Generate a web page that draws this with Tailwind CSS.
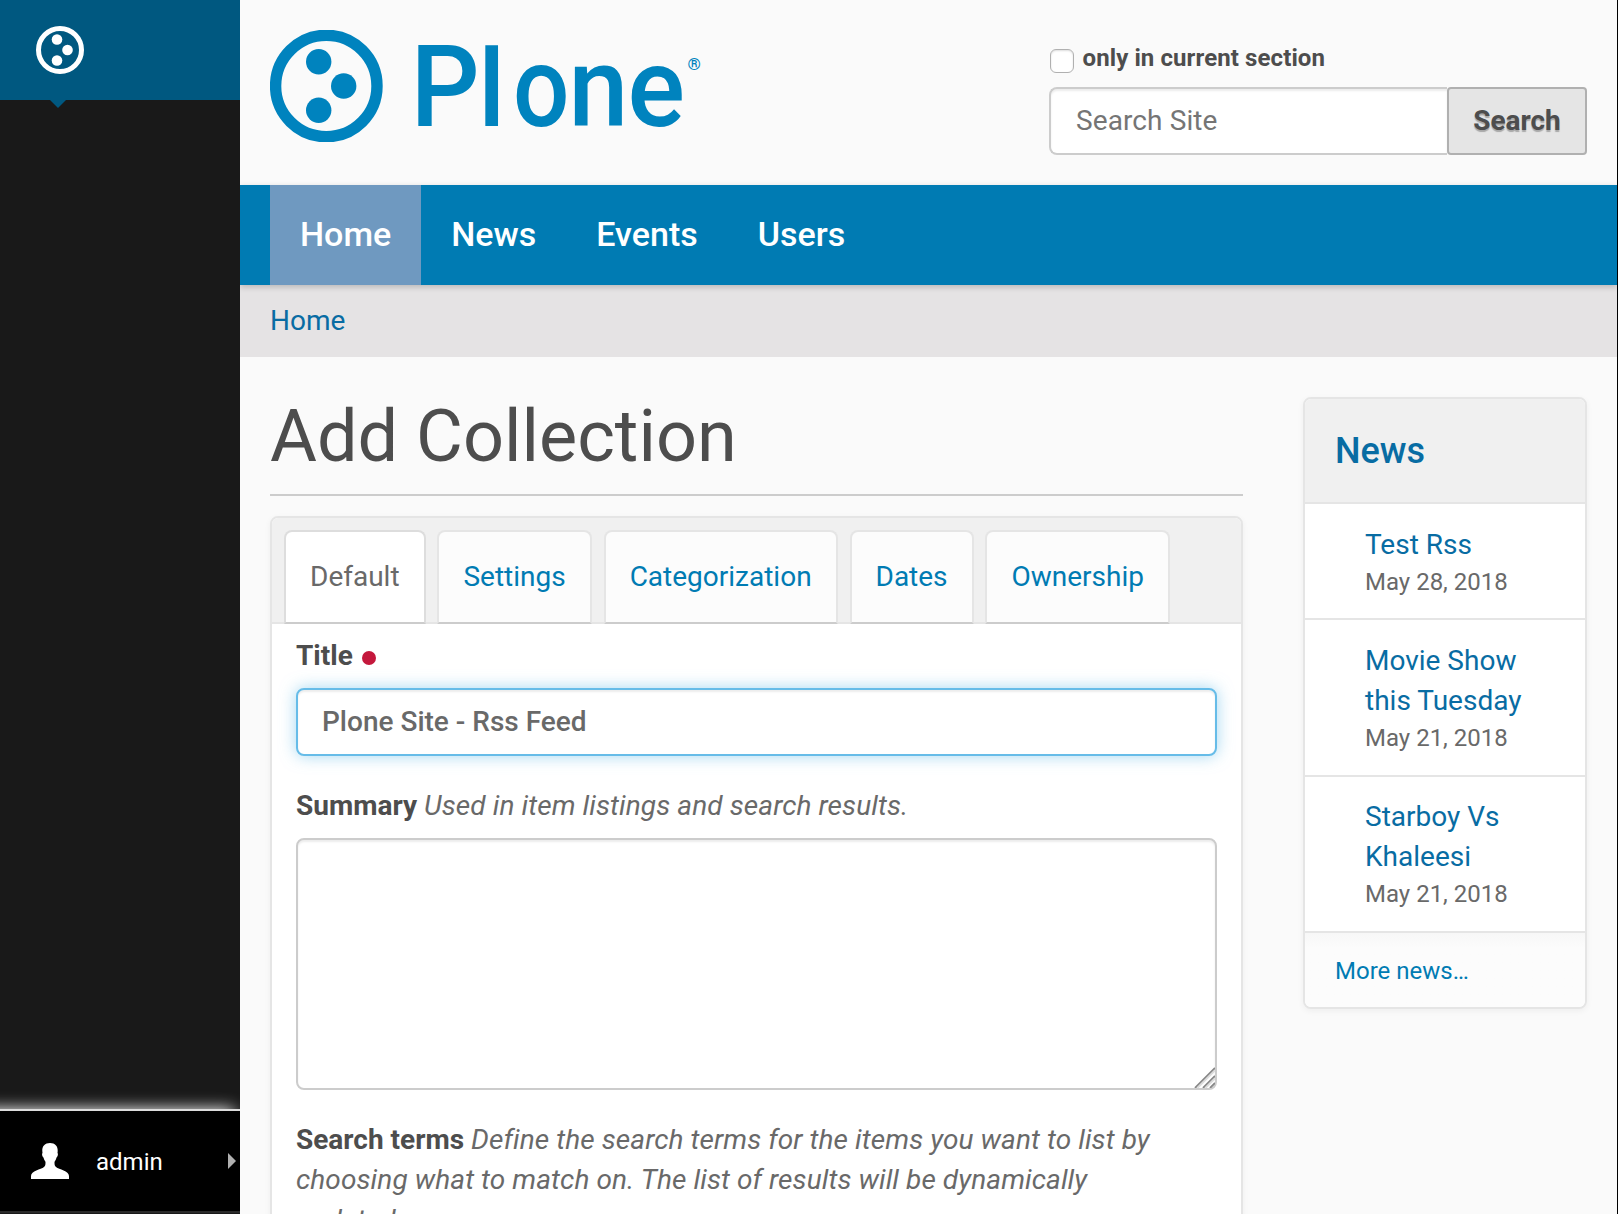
<!DOCTYPE html>
<html lang="en">
<head>
<meta charset="utf-8">
<title>Add Collection</title>
<script src="https://cdn.jsdelivr.net/npm/@tailwindcss/browser@4"></script>
</head>
<body class="flex h-[1214px] w-[1618px] overflow-hidden bg-black font-['Roboto',sans-serif] text-[28px] leading-10 text-[#696969]">
<aside class="flex h-[1214px] w-60 shrink-0 flex-col bg-[#191919]">
  <div class="relative h-[100px] bg-[#005880]">
    <svg class="absolute left-0 top-0" width="240" height="110" viewBox="0 0 240 110">
      <circle cx="60" cy="50" r="21.5" fill="none" stroke="#fff" stroke-width="5"/>
      <circle cx="57" cy="39.5" r="5.3" fill="#fff"/><circle cx="67.5" cy="50" r="5.3" fill="#fff"/><circle cx="57" cy="60.5" r="5.3" fill="#fff"/>
      <path d="M50 100h16l-8 8z" fill="#005880"/>
    </svg>
  </div>
  <div class="flex-1"></div>
  <div class="h-5 w-60 shrink-0 overflow-hidden"><div class="-ml-5 mt-5 h-10 w-[254px] shadow-[0_0_16px_#fff]"></div></div>
  <div class="mb-px flex h-[104px] shrink-0 items-center border-b-2 border-t-2 border-b-[#2a2a2a] border-t-[#dcdcdc] bg-black pl-[31px] pr-1 text-2xl text-white">
    <svg width="38" height="36" viewBox="0 0 38 36" fill="#fff"><path d="M19 0c-5 0-8 3-7.700 8l.2 2c-1 1 0 4 1 4.500.5 2.500 1.500 3 2 4.500 0 2 0 4-1.500 5C10 26.500 0 27.500 0 33v3h38v-3c0-5.500-10-6.500-13-9-1.500-1-1.500-3-1.500-5 .5-1.500 1.500-2 2-4.500 1-.5 2-3.500 1-4.500l.2-2C27 3 24 0 19 0z"/></svg>
    <span class="ml-[27px] flex-1 pt-0.5">admin</span>
    <svg width="8" height="16" viewBox="0 0 8 16"><path d="M0 0l8 8-8 8z" fill="#b0b0b0"/></svg>
  </div>
</aside>
<div class="flex h-[1214px] w-[1377px] shrink-0 flex-col overflow-hidden bg-[#fafafa]">
  <header class="flex h-[185px] shrink-0 justify-between pl-[30px] pr-[30px]">
    <svg class="mt-[30px]" width="440" height="112" viewBox="270 30 440 112" fill="#0083be">
      <circle cx="326.300" cy="86" r="50.700" fill="none" stroke="#0083be" stroke-width="11.400"/>
      <circle cx="318.700" cy="61.700" r="12.700"/><circle cx="343.700" cy="86" r="12.700"/><circle cx="318.700" cy="110.300" r="12.700"/>
      <g font-family="Roboto" font-weight="500" font-size="113">
        <text transform="translate(410.500 125.500) scale(.96 1)">P</text>
        <text transform="translate(478 125.500) scale(.95 .945)">l</text>
        <text transform="translate(513 125.500) scale(.88 1)">o</text>
        <text transform="translate(568.500 125.500) scale(.95 .98)">n</text>
        <text transform="translate(627.500 125.500) scale(.95 .98)">e</text>
      </g>
      <text x="687.500" y="70" font-family="Roboto" font-weight="700" font-size="17">®</text>
    </svg>
    <form class="w-[538px] pt-[38px]">
      <label class="flex h-10 pl-px text-2xl font-bold leading-10 tracking-[0.1px] text-[#4d4d4d]"><span class="mr-[8.500px] mt-[11px] h-6 w-6 rounded-md border border-[#b0b0b0] bg-white shadow-[inset_0_1px_2px_#0002]"></span><span>only in current section</span></label>
      <div class="mt-[9px] flex h-[68px]">
        <div class="flex flex-1 items-center rounded-l-lg border-2 border-r-0 border-[#ccc] bg-white pl-[25px] tracking-[0.1px] text-[#757575] shadow-[inset_0_2px_2px_#00000013]">Search Site</div>
        <div class="flex w-[140px] items-center justify-center rounded-[4px] border-2 border-[#b0b0b0] bg-[#e5e5e5] font-bold text-[#4d4d4d] [text-shadow:0_2px_1px_#0004]">Search</div>
      </div>
    </form>
  </header>
  <nav class="z-10 flex h-[100px] shrink-0 bg-[#007bb3] pl-[30px] text-[34px] font-medium leading-[98px] text-white shadow-[0_2px_6px_#0003]">
    <a class="bg-[#6f99c0] px-[30px]">Home</a><a class="px-[30px]">News</a><a class="px-[30px]">Events</a><a class="px-[30px]">Users</a>
  </nav>
  <div class="h-[72px] shrink-0 bg-[#e5e3e4] pl-[30px] leading-[72px] text-[#086ca3]">Home</div>
  <div class="flex min-h-0 flex-1 items-start">
    <main class="ml-[30px] w-[973px]">
      <h1 class="h-[139px] border-b-2 border-[#ccc] pt-[40px] text-[72px] leading-[80px] text-[#4d4d4d]">Add Collection</h1>
      <div class="mt-5 h-[760px] rounded-t-lg border-2 border-[#e5e5e5] bg-white shadow-[0_2px_6px_#0000000d]">
        <div class="flex h-[106px] gap-[11.900px] rounded-t-md border-b-2 border-[#e5e5e5] bg-[#f0f0f0] pl-3 pt-3 text-[#007bb3]">
          <a class="h-[94px] rounded-t-lg border-2 border-[#ddd] border-b-[#ccc] bg-white px-6 leading-[90px] text-[#696969]">Default</a>
          <a class="h-[94px] rounded-t-lg border-2 border-[#e5e5e5] border-b-[#ccc] bg-[#fcfcfc] px-6 leading-[90px]">Settings</a>
          <a class="h-[94px] rounded-t-lg border-2 border-[#e5e5e5] border-b-[#ccc] bg-[#fcfcfc] px-6 leading-[90px]">Categorization</a>
          <a class="h-[94px] rounded-t-lg border-2 border-[#e5e5e5] border-b-[#ccc] bg-[#fcfcfc] px-6 leading-[90px]">Dates</a>
          <a class="h-[94px] rounded-t-lg border-2 border-[#e5e5e5] border-b-[#ccc] bg-[#fcfcfc] px-6 leading-[90px]">Ownership</a>
        </div>
        <div class="px-6 pt-3">
          <div class="flex h-10 items-center font-bold text-[#4d4d4d]">Title<span class="ml-[9px] mt-1 h-[14px] w-[14px] rounded-full bg-[#c4183c]"></span></div>
          <div class="mt-3 h-[68px] rounded-lg border-2 border-[#66bce8] bg-white pl-6 font-medium leading-[64px] shadow-[inset_0_2px_2px_#00000013,0_0_16px_#66bce899]">Plone Site - Rss Feed</div>
          <div class="mt-[30px] h-10"><b class="text-[#4d4d4d]">Summary</b> <i class="tracking-[0.1px]">Used in item listings and search results.</i></div>
          <div class="mt-3 flex h-[252px] items-end justify-end rounded-lg border-2 border-[#ccc] bg-white shadow-[inset_0_2px_2px_#00000013]">
            <svg width="21" height="21" viewBox="0 0 21 21" fill="none" stroke="#888" stroke-width="1.800"><path d="M1 21L21 1M9 21L21 9M16 21l5-5"/><path d="M3.500 21L21 3.500M11.500 21L21 11.500" stroke="#ddd"/></svg>
          </div>
          <div class="mt-[30px]"><b class="text-[#4d4d4d]">Search terms</b> <i class="tracking-[0.090px]">Define the search terms for the items you want to list by<br>choosing what to match on. The list of results will be dynamically<br>updated.</i></div>
        </div>
      </div>
    </main>
    <section class="ml-[60px] mt-[40px] w-[284px] overflow-hidden rounded-lg border-2 border-[#e5e5e5] bg-white text-[#086ca3] shadow-[0_2px_6px_#0000000d]">
      <h2 class="h-[105px] border-b-2 border-[#e5e5e5] bg-[#f0f0f0] pl-[30px] text-[36px] font-medium leading-[105px]">News</h2>
      <div class="h-[116px] border-b-2 border-[#e5e5e5] pl-[60px] pt-[21px]">Test Rss<div class="text-2xl leading-[34px] text-[#696969]">May 28, 2018</div></div>
      <div class="h-[157px] border-b-2 border-[#e5e5e5] pl-[60px] pt-[21px]">Movie Show<br>this Tuesday<div class="text-2xl leading-[34px] text-[#696969]">May 21, 2018</div></div>
      <div class="h-[156px] border-b-2 border-[#e5e5e5] pl-[60px] pt-5">Starboy Vs<br>Khaleesi<div class="text-2xl leading-[34px] text-[#696969]">May 21, 2018</div></div>
      <div class="h-[74px] bg-linear-to-b from-[#f7f7f7] to-[#fcfcfc] to-20% pl-[30px] text-2xl leading-[76px] text-[#007bb3]">More news…</div>
    </section>
  </div>
</div>
</body>
</html>
